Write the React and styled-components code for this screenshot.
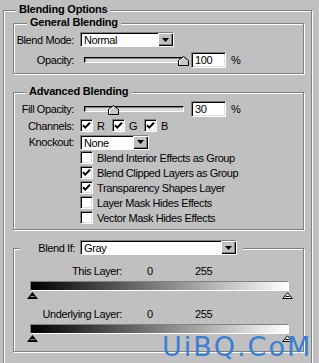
import React from 'react';
import styled, { createGlobalStyle } from 'styled-components';

const GlobalStyle = createGlobalStyle`
  html, body {
    margin: 0;
    padding: 0;
    background: #c0c0c0;
  }
  body {
    font-family: "Liberation Sans", Arial, sans-serif;
    font-size: 11px;
    letter-spacing: -0.4px;
    color: #000;
  }
`;

const Page = styled.div`
  position: relative;
  width: 319px;
  height: 363px;
  overflow: hidden;
  box-sizing: border-box;
  padding: 10px 0 0 3px;
`;

// etched frame, dark line with a white line beside it
const Group = styled.div`
  position: relative;
  box-sizing: border-box;
  border: 1px solid #808080;
  box-shadow: inset 1px 1px 0 #fff, 1px 1px 0 #fff;
  margin-top: ${p => p.$mt || 0}px;
  padding: ${p => p.$pad || '0'};
  width: ${p => p.$w}px;
  height: ${p => (p.$h ? p.$h + 'px' : 'auto')};
`;

const Title = styled.span`
  position: absolute;
  top: -8px;
  left: ${p => p.$left}px;
  padding: 0 3px;
  background: #c0c0c0;
  font-weight: bold;
  letter-spacing: -0.2px;
  line-height: 13px;
  white-space: nowrap;
`;

const Row = styled.div`
  display: flex;
  align-items: center;
  height: ${p => p.$h}px;
  margin-top: ${p => p.$mt || 0}px;
  padding-left: ${p => p.$indent || 0}px;
`;

const Label = styled.span`
  flex: none;
  width: ${p => p.$w || 60}px;
  margin-right: ${p => (p.$gap === undefined ? 6 : p.$gap)}px;
  text-align: right;
  white-space: nowrap;
`;

const SelectBox = styled.div`
  display: flex;
  flex: none;
  width: ${p => p.$w}px;
  height: 15px;
  box-sizing: border-box;
  background: #fff;
  border: 1px solid;
  border-color: #808080 #fff #fff #808080;
  box-shadow: inset 1px 1px 0 #000;
`;

const SelectText = styled.span`
  flex: 1;
  padding: 1px 0 0 3px;
  line-height: 12px;
  white-space: nowrap;
`;

const ArrowButton = styled.span`
  flex: none;
  width: 15px;
  display: flex;
  align-items: center;
  justify-content: center;
  background: #c0c0c0;
  box-shadow: inset 1px 1px 0 #fff, inset -1px -1px 0 #000, inset -2px -2px 0 #808080;
`;

const NumInput = styled.div`
  flex: none;
  width: 35px;
  height: 16px;
  box-sizing: border-box;
  background: #fff;
  border: 1px solid;
  border-color: #808080 #fff #fff #808080;
  box-shadow: inset 1px 1px 0 #000, inset -1px -1px 0 #dfdfdf;
  padding-left: 3px;
  line-height: 14px;
`;

const Percent = styled.span`
  margin-left: 5px;
`;

const Slider = styled.div`
  position: relative;
  flex: none;
  width: 107px;
  height: 16px;
  box-sizing: border-box;
  padding: 5px 3px 0 4px;
  margin-right: 4px;
`;

const Track = styled.div`
  height: 6px;
  box-sizing: border-box;
  border: 1px solid;
  border-color: #000 #fff #fff #000;
  box-shadow: inset 1px 1px 0 #808080;
  background: #d8d8d8;
`;

const Thumb = styled.svg`
  position: absolute;
  top: 4px;
  display: block;
`;

const CheckBox = styled.span`
  flex: none;
  width: 13px;
  height: 13px;
  box-sizing: border-box;
  background: #fff;
  border: 1px solid;
  border-color: #808080 #fff #fff #808080;
  box-shadow: inset 1px 1px 0 #000, inset -1px -1px 0 #dfdfdf;
  display: flex;
  align-items: center;
  justify-content: center;
`;

const CheckItem = styled.span`
  display: flex;
  align-items: center;
  width: ${p => (p.$w ? p.$w + 'px' : 'auto')};
  gap: 4px;
  white-space: nowrap;
`;

const Legend = styled.div`
  position: absolute;
  top: -9px;
  left: 6px;
  display: flex;
  align-items: center;
  padding-right: 6px;
  background: #c0c0c0;
`;

const LevelRow = styled.div`
  display: flex;
  height: 12px;
  line-height: 12px;
  margin-top: ${p => p.$mt || 0}px;
`;

const LevelLabel = styled.span`
  width: 108px;
  text-align: right;
  white-space: nowrap;
`;

const LevelMin = styled.span`
  width: 48px;
  margin-left: 25px;
`;

const GradientBar = styled.div`
  margin: 4px 0 0 16px;
  width: 259px;
  height: 10px;
  box-sizing: border-box;
  border: 1px solid;
  border-color: #808080 #fff #fff #808080;
  background: linear-gradient(to right, #000, #fff);
`;

const TriRow = styled.div`
  display: flex;
  justify-content: space-between;
  margin: 1px 0 0 13px;
  width: 266px;
  height: 7px;
`;

const Watermark = styled.div`
  position: absolute;
  left: 162px;
  top: 333px;
  font-family: "DejaVu Sans", "Liberation Sans", sans-serif;
  font-size: 27px;
  line-height: 28px;
  letter-spacing: 2px;
  color: #3a7fd5;
  white-space: nowrap;
`;

const Arrow = () => (
  <svg width="7" height="4" viewBox="0 0 7 4">
    <path d="M0 0H7L3.5 4Z" fill="#000" />
  </svg>
);

const Select = ({ value, width }) => (
  <SelectBox $w={width}>
    <SelectText>{value}</SelectText>
    <ArrowButton>
      <Arrow />
    </ArrowButton>
  </SelectBox>
);

const Check = ({ on }) => (
  <CheckBox>
    {on && (
      <svg width="9" height="9" viewBox="0 0 9 9">
        <path d="M1 4.2L3.3 6.6L8 1.6" stroke="#000" strokeWidth="2" fill="none" />
      </svg>
    )}
  </CheckBox>
);

const OpacitySlider = ({ value }) => (
  <Slider>
    <Track />
    <Thumb
      width="11"
      height="10"
      viewBox="0 0 11 10"
      style={{ left: 4 + (99 * value) / 100 - 5.5 }}
    >
      <path d="M0.5 9.5V4.5L5.5 0.5L10.5 4.5V9.5Z" fill="#c8c8c8" stroke="#000" />
      <path d="M1.5 8.5V5L5.5 1.8" stroke="#fff" fill="none" />
    </Thumb>
  </Slider>
);

const BlackTri = () => (
  <svg width="11" height="7" viewBox="0 0 11 7">
    <path d="M5.5 0L11 7H0Z" fill="#000" />
    <path d="M3.5 4.5H7.5" stroke="#9a9a9a" />
  </svg>
);

const WhiteTri = () => (
  <svg width="11" height="7" viewBox="0 0 11 7">
    <path d="M5.5 0.8L10.3 6.5H0.7Z" fill="#fff" stroke="#000" />
    <path d="M3.5 4.5H7.5" stroke="#000" />
  </svg>
);

const LevelBlock = ({ label, mt }) => (
  <>
    <LevelRow $mt={mt}>
      <LevelLabel>{label}</LevelLabel>
      <LevelMin>0</LevelMin>
      <span>255</span>
    </LevelRow>
    <GradientBar />
    <TriRow>
      <BlackTri />
      <WhiteTri />
    </TriRow>
  </>
);

const advancedOptions = [
  { label: 'Blend Interior Effects as Group', on: false },
  { label: 'Blend Clipped Layers as Group', on: true },
  { label: 'Transparency Shapes Layer', on: true },
  { label: 'Layer Mask Hides Effects', on: false },
  { label: 'Vector Mask Hides Effects', on: false },
];

export default function App() {
  return (
    <Page>
      <GlobalStyle />
      <Group $w={309} $h={360} $pad="12px 7px 0 9px">
        <Title $left={12}>Blending Options</Title>

        <Group $w={291} $pad="8px 0 5px 0">
          <Title $left={13}>General Blending</Title>
          <Row $h={15}>
            <Label>Blend Mode:</Label>
            <Select value="Normal" width={94} />
          </Row>
          <Row $h={16} $mt={5}>
            <Label>Opacity:</Label>
            <OpacitySlider value={100} />
            <NumInput>100</NumInput>
            <Percent>%</Percent>
          </Row>
        </Group>

        <Group $w={291} $mt={18} $pad="8px 0 4px 0">
          <Title $left={12}>Advanced Blending</Title>
          <Row $h={16}>
            <Label>Fill Opacity:</Label>
            <OpacitySlider value={30} />
            <NumInput>30</NumInput>
            <Percent>%</Percent>
          </Row>
          <Row $h={17}>
            <Label>Channels:</Label>
            <CheckItem $w={32}><Check on />R</CheckItem>
            <CheckItem $w={32}><Check on />G</CheckItem>
            <CheckItem><Check on />B</CheckItem>
          </Row>
          <Row $h={16}>
            <Label>Knockout:</Label>
            <Select value="None" width={69} />
          </Row>
          {advancedOptions.map(o => (
            <Row key={o.label} $h={15} $indent={66}>
              <CheckItem>
                <Check on={o.on} />
                {o.label}
              </CheckItem>
            </Row>
          ))}
        </Group>

        <Group $w={291} $mt={18} $pad="16px 0 9px 0">
          <Legend>
            <Label $w={55} $gap={5}>Blend If:</Label>
            <Select value="Gray" width={157} />
          </Legend>
          <LevelBlock label="This Layer:" />
          <LevelBlock label="Underlying Layer:" mt={9} />
        </Group>
      </Group>
      <Watermark>UiBQ.CoM</Watermark>
    </Page>
  );
}
